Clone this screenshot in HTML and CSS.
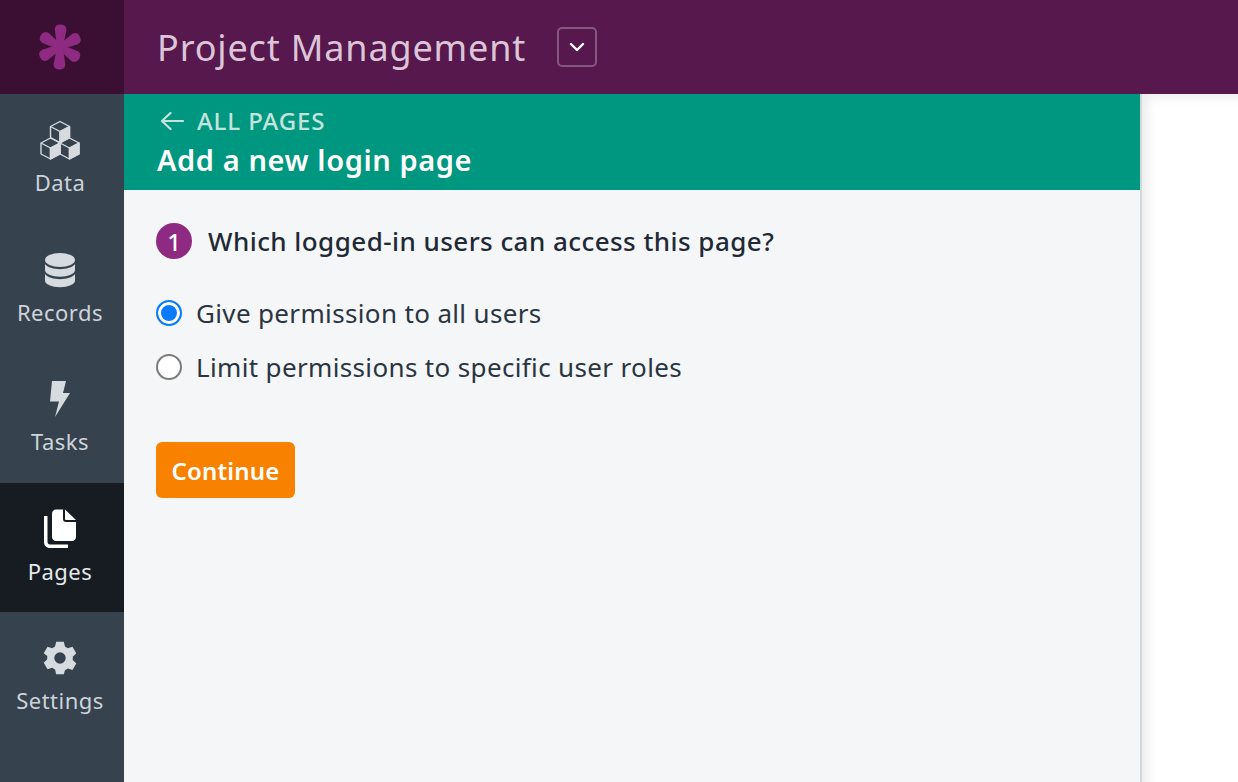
FILE: index.html
```html
<!DOCTYPE html>
<html lang="en">
<head>
<meta charset="utf-8">
<title>Add a new login page</title>
<link rel="stylesheet" href="styles.css">
</head>
<body>
<div class="app">
  <header class="topbar">
    <div class="logo">
      <svg width="46" height="46" viewBox="-23 -23 46 46" fill="#8e2a82">
        <path d="M-2.800 0 L-5.800 -17 Q-6 -22.500 0 -22.500 Q6 -22.500 5.800 -17 L2.800 0 Z" transform="rotate(2)"/>
        <path d="M-2.800 0 L-5.800 -17 Q-6 -22.500 0 -22.500 Q6 -22.500 5.800 -17 L2.800 0 Z" transform="rotate(62)"/>
        <path d="M-2.800 0 L-5.800 -17 Q-6 -22.500 0 -22.500 Q6 -22.500 5.800 -17 L2.800 0 Z" transform="rotate(122)"/>
        <path d="M-2.800 0 L-5.800 -17 Q-6 -22.500 0 -22.500 Q6 -22.500 5.800 -17 L2.800 0 Z" transform="rotate(182)"/>
        <path d="M-2.800 0 L-5.800 -17 Q-6 -22.500 0 -22.500 Q6 -22.500 5.800 -17 L2.800 0 Z" transform="rotate(242)"/>
        <path d="M-2.800 0 L-5.800 -17 Q-6 -22.500 0 -22.500 Q6 -22.500 5.800 -17 L2.800 0 Z" transform="rotate(302)"/>
      </svg>
    </div>
    <div class="project">
      <h1 class="project-name">Project Management</h1>
      <button class="project-toggle" type="button" aria-label="Switch project">
        <svg width="16" height="10" viewBox="0 0 16 10" fill="none" stroke="#fff" stroke-width="2.400" stroke-linecap="round" stroke-linejoin="round"><path d="M2 2l6 6 6-6"/></svg>
      </button>
    </div>
  </header>
  <div class="body">
    <nav class="sidebar">
      <a class="nav-item">
        <svg class="nav-icon" width="40" height="40" viewBox="0 0 40 40" stroke="#d5dbdf" stroke-width="1.400" stroke-linejoin="round">
          <path d="M20 1.500 29.500 6.500v11L20 22.500l-9.500-5v-11z" fill="none"/>
          <path d="M10.500 6.500 20 11.500l9.500-5M20 11.500v11" fill="none"/>
          <path d="M20 11.500v11l9.500-5v-11z" fill="#d5dbdf"/>
          <path d="M10.500 18 20 23v11l-9.500 5L1 34V23z" fill="none"/>
          <path d="M1 23l9.500 5 9.500-5M10.500 28v11" fill="none"/>
          <path d="M10.500 28v11l9.500-5V23z" fill="#d5dbdf"/>
          <path d="M29.500 18 39 23v11l-9.500 5L20 34V23z" fill="none"/>
          <path d="M20 23l9.500 5 9.500-5M29.500 28v11" fill="none"/>
          <path d="M29.500 28v11l9.500-5V23z" fill="#d5dbdf"/>
        </svg>
        <span class="nav-label">Data</span>
      </a>
      <a class="nav-item">
        <svg class="nav-icon" width="40" height="40" viewBox="0 0 40 40" fill="#d5dbdf">
          <ellipse cx="20" cy="10" rx="15" ry="7"/>
          <path d="M5 14c2.500 3.400 8.800 5.200 15 5.200s12.500-1.800 15-5.200v6c0 3.800-6.700 6.700-15 6.700S5 23.800 5 20z"/>
          <path d="M5 24c2.500 3.400 8.800 5.200 15 5.200s12.500-1.800 15-5.200v6.500c0 3.800-6.700 6.700-15 6.700S5 34.300 5 30.500z"/>
        </svg>
        <span class="nav-label">Records</span>
      </a>
      <a class="nav-item">
        <svg class="nav-icon" width="40" height="40" viewBox="0 0 40 40" fill="#d5dbdf">
          <path d="M12 2H26L23 14H30L15 38L19 22.500H10z"/>
        </svg>
        <span class="nav-label">Tasks</span>
      </a>
      <a class="nav-item nav-item-active">
        <svg class="nav-icon" width="40" height="40" viewBox="0 0 40 40" fill="#fff">
          <path d="M16 .5H23V10c0 2 1 3 3 3H36V28c0 2.200-1.800 4-4 4H16c-2.200 0-4-1.800-4-4V4.500c0-2.200 1.800-4 4-4z"/>
          <path d="M25 .5 36 11H26c-.5 0-1-.5-1-1z"/>
          <path d="M4 7H7.500V33c0 1.500 1 2.500 2.500 2.500H28V39H10c-3.500 0-6-2.500-6-6z"/>
        </svg>
        <span class="nav-label">Pages</span>
      </a>
      <a class="nav-item">
        <svg class="nav-icon" width="40" height="40" viewBox="-1 -1 42 42" fill="#d5dbdf">
          <path fill-rule="evenodd" d="M16 3h8l1.200 5 3 1.700 4.900-1.500 4 6.900-3.700 3.500v3.600l3.700 3.500-4 6.900-4.900-1.500-3 1.700L24 37h-8l-1.200-5-3-1.700-4.900 1.500-4-6.900 3.700-3.500v-3.600L2.900 15.100l4-6.900 4.900 1.500 3-1.700zM20 14a6 6 0 1 0 0 12 6 6 0 0 0 0-12z"/>
        </svg>
        <span class="nav-label">Settings</span>
      </a>
    </nav>
    <main class="panel">
      <div class="panel-head">
        <a class="back-link">
          <svg width="26" height="20" viewBox="0 0 26 20" fill="none" stroke="#c5e3dd" stroke-width="2.200" stroke-linecap="round" stroke-linejoin="round"><path d="M25 10H4M12.500 2 4 10l8.500 8"/></svg>
          <span>ALL PAGES</span>
        </a>
        <h2 class="panel-title">Add a new login page</h2>
      </div>
      <div class="panel-content">
        <div class="question">
          <span class="step">1</span>
          <span class="question-text">Which logged-in users can access this page?</span>
        </div>
        <div class="options">
          <label class="option"><span class="radio radio-checked"></span><span>Give permission to all users</span></label>
          <label class="option"><span class="radio"></span><span>Limit permissions to specific user roles</span></label>
        </div>
        <button class="continue" type="button">Continue</button>
      </div>
    </main>
    <div class="canvas"></div>
  </div>
</div>
</body>
</html>
```
FILE: styles.css
```css
* { box-sizing: border-box; }
html, body { margin: 0; height: 100%; overflow: hidden; }
body { font-family: "Noto Sans", "Open Sans", sans-serif; color: #1f2a36; background: #fff; }
.app { display: flex; flex-direction: column; height: 782px; }
.topbar { display: flex; height: 94px; background: #56184d; flex: none; position: relative; z-index: 2; }
.logo { width: 124px; display: flex; align-items: center; justify-content: center; padding-right: 4px; background: #3b0f33; }
.project { display: flex; align-items: center; padding-left: 33px; }
.project-name { margin: 0; font-size: 36px; font-weight: 400; color: #dcc5d8; letter-spacing: 0.85px; }
.project-toggle { width: 40px; height: 40px; margin-left: 31px; padding: 0; background: none; border: 2px solid #86587f; border-radius: 5px; display: flex; align-items: center; justify-content: center; }
.body { display: flex; flex: 1; min-height: 0; }
.sidebar { width: 124px; flex: none; background: #36424e; display: flex; flex-direction: column; }
.nav-item { height: 129.500px; flex: none; display: flex; flex-direction: column; align-items: center; padding: 26px 4px 0 0; color: #ccd4da; }
.nav-item-active { background: #161c22; color: #e6eaec; }
.nav-icon { display: block; }
.nav-label { font-size: 22px; line-height: 30px; margin-top: 7px; letter-spacing: 0.5px; }
.panel { width: 1018px; flex: none; background: #f4f6f8; border-right: 2px solid #cfdadb; display: flex; flex-direction: column; }
.panel-head { height: 96px; background: #009780; padding: 12px 0 0 32px; }
.back-link { display: flex; align-items: center; gap: 17px; color: #c5e3dd; font-size: 24px; font-weight: 500; line-height: 30px; letter-spacing: 0.9px; }
.back-link svg { margin-left: 2px; margin-right: -4px; }
.panel-title { margin: 6px 0 0 1px; font-size: 29px; line-height: 36px; font-weight: 600; color: #fff; letter-spacing: 0.6px; }
.panel-content { padding: 33px 32px; }
.question { display: flex; align-items: center; gap: 16px; height: 36px; }
.step { width: 36px; height: 36px; border-radius: 50%; background: #8e2a82; color: #fff; font-size: 24px; font-weight: 500; display: flex; align-items: center; justify-content: center; flex: none; }
.question-text { font-size: 26px; font-weight: 500; color: #1f2a36; letter-spacing: 0.45px; }
.options { display: flex; flex-direction: column; gap: 18px; margin-top: 36px; }
.option { display: flex; align-items: center; gap: 14px; height: 36px; font-size: 26px; color: #2a3541; letter-spacing: 0.35px; }
.radio { width: 26px; height: 26px; border-radius: 50%; background: #fff; border: 2px solid #7b7b7b; flex: none; }
.radio-checked { border-color: #0a7bff; background: #0a7bff; box-shadow: inset 0 0 0 3px #fff; }
.continue { display: block; margin-top: 57px; width: 139px; height: 56px; padding: 0; border: 0; border-radius: 6px; background: #f98100; color: #fff; font-family: inherit; font-size: 24px; font-weight: 600; letter-spacing: 0.15px; }
.canvas { flex: 1; background: #fff; box-shadow: inset 10px 8px 12px -6px rgba(0, 0, 0, 0.09); }
```
